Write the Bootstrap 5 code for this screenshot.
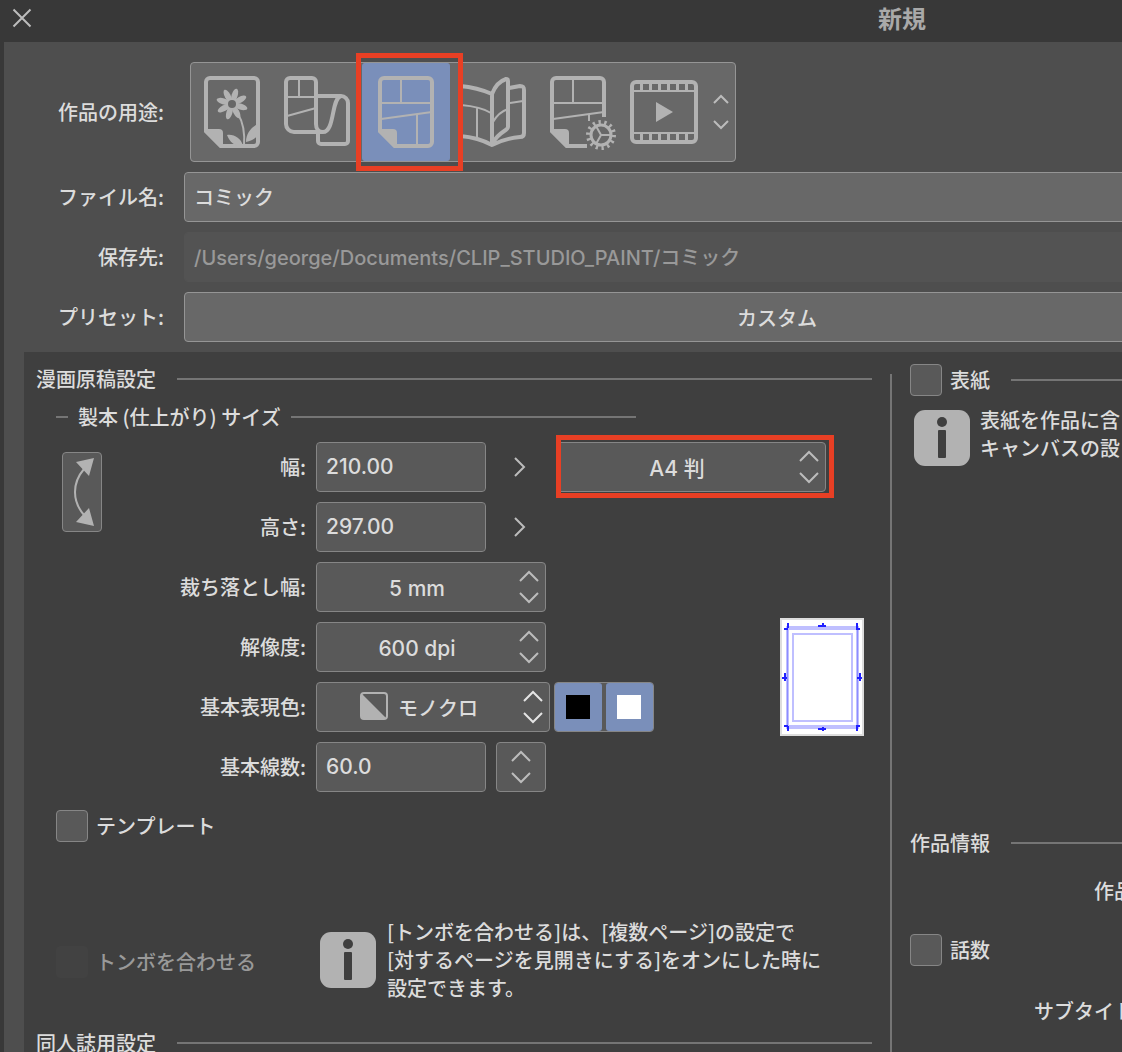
<!DOCTYPE html>
<html lang="ja">
<head>
<meta charset="utf-8">
<meta name="viewport" content="width=device-width, initial-scale=1">
<title>新規</title>
<link rel="stylesheet" href="https://cdn.jsdelivr.net/npm/bootstrap@5.3.0/dist/css/bootstrap.min.css">
<style>
:root { --ink: #dcdcdc; --icon: #b2b2b2; --frame: #4e4e4e; --panel: #3f3f3f; --bar: #383838; --field: #595959; --edge: #868686; --pick: #7a8fba; --hot: #e83f24; --line: #757575; }
body { height: 100vh; overflow: hidden; background: var(--bar); color: var(--ink); font: 500 20px/28px "Noto Sans CJK JP", sans-serif; }
/* the dialog is wider than a small window and is cut at its right edge */
.dialog { min-width: 1802px; min-height: 100vh; padding-left: 4px; }
.titlebar { height: 42px; padding: 0 32px 6px 6px; }
.titlebar h1 { font-size: 24px; line-height: 36px; font-weight: 700; color: #a9a9a9; }
.bare { background: none; border: 0; padding: 0; border-radius: 0; line-height: 0; }
.frame-body { background: var(--frame); padding-top: 20px; }
.top-form { width: 1394px; row-gap: 10px; }
.top-label { width: 160px; text-align: right; flex: none; }
.top-row { column-gap: 20px; }
.purpose { margin-left: 6px; height: 100px; background: #686868; border: 1px solid #959595; border-radius: 4px; }
.purpose button { width: 86px; height: 98px; flex: none; }
.purpose .picked { background: var(--pick); border-radius: 3px; box-shadow: -1px 0 var(--pick), 1px 0 var(--pick); z-index: 2; }
.purpose .stepper button { width: 28px; height: 26px; display: block; }
.hot { border: 5px solid var(--hot); pointer-events: none; z-index: 3; }
.hot-purpose { inset: -10px -14px -10px -7px; }
.hot-size { inset: -7px -8px -6px 0; }
.glyph { fill: none; stroke: var(--icon); stroke-width: 4; display: block; }
.glyph .thin { stroke-width: 2; }
.glyph .solid { fill: var(--icon); stroke: none; }
.chev { fill: none; stroke: #bcbcbc; stroke-width: 2; display: block; }
.form-control, .form-select { height: 50px; padding: 0 9px; border: 1px solid var(--edge); border-radius: 4px; background-color: var(--field); color: var(--ink); font: 500 21px/28px Inter, "Noto Sans CJK JP", sans-serif; }
.form-control { padding-bottom: 2px; }
.top-form .form-control, .top-form .form-select { background-color: #686868; border-color: #959595; font-size: 20px; }
.top-form .form-control:disabled { background-color: #535353; border-color: #535353; color: #999; }
.form-select { padding: 4px 28px 0 0; text-align: center; text-align-last: center; background-position: right 6px center; background-size: 20px 34px;
  background-image: url("data:image/svg+xml,%3csvg xmlns='http://www.w3.org/2000/svg' viewBox='0 0 20 34'%3e%3cpath d='M1 11l9-9 9 9M1 23l9 9 9-9' fill='none' stroke='%23bcbcbc' stroke-width='2'/%3e%3c/svg%3e"); }
.select-ink { width: 234px; padding-left: 38px; font-size: 20px;
  background-image: url("data:image/svg+xml,%3csvg xmlns='http://www.w3.org/2000/svg' viewBox='0 0 20 34'%3e%3cpath d='M1 11l9-9 9 9M1 23l9 9 9-9' fill='none' stroke='%23e4e4e4' stroke-width='2'/%3e%3c/svg%3e"); }
.ink-icon { left: 44px; top: 10px; pointer-events: none; }
.w-num { width: 170px; }
.w-pick { width: 230px; }
.w-size { width: 270px; }
.more { width: 70px; height: 50px; padding-right: 2px; }
.boxed { background: var(--field); border: 1px solid var(--edge); border-radius: 4px; }
.swap { width: 40px; height: 80px; margin-top: 10px; padding: 0; flex: none; line-height: 0; }
.spin { width: 50px; height: 50px; margin-left: 10px; }
.spin button { width: 48px; height: 24px; }
.inks { width: 100px; height: 50px; margin-left: 4px; }
.inks button { width: 47px; height: 48px; border: 0; border-radius: 3px; background: var(--pick); padding: 11px; }
.chip { display: block; width: 24px; height: 24px; }
.settings { margin: 10px 0 0 20px; background: var(--panel); }
.manuscript { flex: 0 0 866px; padding: 12px 18px 0 12px; }
.cover { padding: 12px 18px 0; }
.divider { width: 2px; margin-top: 22px; background: var(--line); flex: none; }
.heading { min-height: 30px; gap: 21px; margin: 0; font-size: 20px; line-height: 28px; font-weight: 500; color: var(--ink); }
.heading::after { content: ""; height: 2px; background: var(--line); flex: 1; }
.subheading { gap: 10px; margin: 8px 236px 10px 20px; }
.subheading::before { content: ""; width: 12px; height: 2px; background: var(--line); }
.size-block { margin-left: 26px; }
.field-rows { row-gap: 10px; }
.field-label { width: 214px; padding-right: 10px; text-align: right; flex: none; }
.preview { margin: 0 8px 56px auto; flex: none; }
.form-check-input { width: 32px; height: 32px; margin: 0; border: 1px solid var(--edge); background-color: var(--field); flex: none; }
.form-check-input[type=checkbox] { border-radius: 4px; }
.form-check-input:disabled { opacity: 1; background-color: #424242; border-color: #424242; }
.form-check-input:disabled ~ label { opacity: 1; }
.tick { gap: 8px; min-height: 32px; }
.template-row { margin: 18px 0 76px 20px; }
.tombo-row { margin: 0 0 26px 20px; }
.tombo-row .tick { width: 264px; padding-top: 4px; color: #999; }
.note { gap: 11px; }
.cover-note { gap: 10px; margin: 6px 0 362px 4px; }
.cover-note svg { margin-top: 8px; }
.work-label { width: 250px; height: 50px; line-height: 50px; text-align: right; margin-top: 8px; display: block; }
.episode { margin: 18px 0 20px; }
</style>
<script src="https://cdn.jsdelivr.net/npm/bootstrap@5.3.0/dist/js/bootstrap.bundle.min.js"></script>
</head>
<body>
<main class="dialog">
  <header class="titlebar d-flex align-items-center">
    <button class="bare" type="button" aria-label="閉じる"><svg class="chev" width="24" height="24" viewBox="0 0 24 24"><path d="M3.500 3.500l17 17M20.500 3.500l-17 17"/></svg></button>
    <h1 class="flex-fill text-center m-0">新規</h1>
  </header>

  <form class="frame-body">
    <div class="top-form d-flex flex-column">
      <div class="top-row d-flex align-items-center">
        <span class="top-label" id="purpose-label">作品の用途:</span>
        <div class="purpose d-flex align-items-center" role="group" aria-labelledby="purpose-label">
          <button class="bare" type="button" aria-label="イラスト">
            <svg class="glyph" width="86" height="98" viewBox="191 63 86 98">
              <path d="M206 131V82a4 4 0 0 1 4-4h44a4 4 0 0 1 4 4v60a4 4 0 0 1-4 4h-33z"/>
              <path class="solid" d="M204 129h15a4 4 0 0 1 4 4v15h-3l-16-16z"/>
              <g class="solid" transform="rotate(17 232 104)">
                <ellipse cx="232" cy="95" rx="3" ry="7"/><ellipse cx="232" cy="113" rx="3" ry="7"/><ellipse cx="223" cy="104" rx="7" ry="3"/><ellipse cx="241" cy="104" rx="7" ry="3"/>
                <g transform="rotate(45 232 104)"><ellipse cx="232" cy="95" rx="3" ry="7"/><ellipse cx="232" cy="113" rx="3" ry="7"/><ellipse cx="223" cy="104" rx="7" ry="3"/><ellipse cx="241" cy="104" rx="7" ry="3"/></g>
                <circle cx="232" cy="104" r="6"/>
              </g>
              <circle cx="232" cy="104" r="4" fill="#686868" stroke="none"/>
              <path class="thin" d="M238 114c5 8 7 19 6 32"/>
              <path class="solid" d="M227 135c7-1 14 3 16 11-7 1-13-3-16-11zM258 124v11c-3 4-7 6-12 7 0-8 5-15 12-18z"/>
            </svg>
          </button>
          <button class="bare" type="button" aria-label="ウェブトゥーン">
            <svg class="glyph" width="86" height="98" viewBox="277 63 86 98">
              <path d="M317 96h24a7 7 0 0 1 7 7v38a3 3 0 0 1-3 3h-24a3 3 0 0 1-3-3v-9"/>
              <path d="M341 96c-10 2-6 36-18 36-5 0-7-4-7-8V82a4 4 0 0 0-4-4h-22a4 4 0 0 0-4 4v42a8 8 0 0 0 8 8h29"/>
              <path class="thin" d="M299 78v18M286 97h30M287 116l29-8"/>
            </svg>
          </button>
          <button class="bare picked position-relative" type="button" aria-label="コミック" aria-pressed="true">
            <svg class="glyph" width="86" height="98" viewBox="363 63 86 98">
              <path d="M380 131V82a4 4 0 0 1 4-4h44a4 4 0 0 1 4 4v60a4 4 0 0 1-4 4h-33z"/>
              <path class="solid" d="M378 129h15a4 4 0 0 1 4 4v15h-3l-16-16z"/>
              <path class="thin" d="M401 78v24M380 103h52M381 119l51-7M417 114v32"/>
            </svg>
            <span class="hot hot-purpose position-absolute"></span>
          </button>
          <button class="bare" type="button" aria-label="同人誌入稿">
            <svg class="glyph" width="86" height="98" viewBox="449 63 86 98" stroke-linejoin="round">
              <path d="M492 145c-9-5-20-8-32-9V86c12 1 23 4 32 8zM492 94c3-8 8-13 14-15 1 0 2 0 2 2v46c0 4-9 4-16 17M509 88l11-2c3 0 4 1 4 4v43c0 3-2 4-4 4-11 1-20 4-28 8"/>
              <path class="thin" d="M461 105c12 1 22 3 30 8M477 107v31M493 122c4-7 9-11 15-13M510 103l13-2"/>
            </svg>
          </button>
          <button class="bare" type="button" aria-label="すべてのコミック設定">
            <svg class="glyph" width="86" height="98" viewBox="535 63 86 98">
              <path d="M604 117V82a4 4 0 0 0-4-4h-44a4 4 0 0 0-4 4v49l15 15h20"/>
              <path class="solid" d="M550 129h15a4 4 0 0 1 4 4v15h-3l-16-16z"/>
              <path class="thin" d="M573 78v24M552 103h52M553 119l51-7M589 114v7"/>
              <circle cx="601" cy="135" r="12.500" stroke-dasharray="2.200 3.410" stroke-width="5"/>
              <circle cx="601" cy="135" r="10" stroke-width="3"/>
              <path class="thin" d="M601 135h10M601 135l-5-9M601 135l-5 9"/>
            </svg>
          </button>
          <button class="bare" type="button" aria-label="アニメーション">
            <svg class="glyph" width="86" height="98" viewBox="621 63 86 98">
              <rect x="632" y="82" width="64" height="60" rx="4"/>
              <path class="thin" d="M633 91h62M633 133h62"/>
              <path stroke-width="6" stroke-dasharray="3 6" d="M640 87h54M640 137h54"/>
              <path class="solid" d="M656 102l17 10-17 10z"/>
            </svg>
          </button>
          <div class="stepper">
            <button class="bare" type="button" aria-label="前へ"><svg class="chev" width="28" height="26" viewBox="0 0 28 26"><path d="M7 17l7-7 7 7"/></svg></button>
            <button class="bare" type="button" aria-label="次へ"><svg class="chev" width="28" height="26" viewBox="0 0 28 26"><path d="M7 9l7 7 7-7"/></svg></button>
          </div>
        </div>
      </div>
      <div class="top-row d-flex align-items-center">
        <label class="top-label" for="file-name">ファイル名:</label>
        <input class="form-control" id="file-name" type="text" value="コミック">
      </div>
      <div class="top-row d-flex align-items-center">
        <label class="top-label" for="save-to">保存先:</label>
        <input class="form-control" id="save-to" type="text" value="/Users/george/Documents/CLIP_STUDIO_PAINT/コミック" disabled>
      </div>
      <div class="top-row d-flex align-items-center">
        <label class="top-label" for="preset">プリセット:</label>
        <select class="form-select" id="preset"><option>カスタム</option></select>
      </div>
    </div>

    <div class="settings d-flex">
      <section class="manuscript">
        <h2 class="heading d-flex align-items-center">漫画原稿設定</h2>
        <h3 class="heading subheading d-flex align-items-center">製本 (仕上がり) サイズ</h3>
        <div class="size-block d-flex align-items-start">
          <button class="swap boxed" type="button" aria-label="幅と高さを入れ替え">
            <svg width="38" height="78" viewBox="63 453 38 78"><path d="M84 469c-12 14-12 32 0 46" fill="none" stroke="#b2b2b2" stroke-width="2"/><path d="M76 462l18-4-5 18zM89 508l5 18-18-4z" fill="#b2b2b2"/></svg>
          </button>
          <div class="field-rows d-flex flex-column flex-fill">
            <div class="d-flex align-items-center">
              <label class="field-label" for="width">幅:</label>
              <input class="form-control w-num" id="width" type="text" value="210.00">
              <button class="bare more d-flex align-items-center justify-content-center" type="button" aria-label="幅の候補"><svg class="chev" width="12" height="20" viewBox="0 0 12 20"><path d="M1 1l9 9-9 9"/></svg></button>
              <div class="position-relative">
                <select class="form-select w-size" aria-label="用紙サイズ"><option>A4 判</option></select>
                <span class="hot hot-size position-absolute"></span>
              </div>
            </div>
            <div class="d-flex align-items-center">
              <label class="field-label" for="height">高さ:</label>
              <input class="form-control w-num" id="height" type="text" value="297.00">
              <button class="bare more d-flex align-items-center justify-content-center" type="button" aria-label="高さの候補"><svg class="chev" width="12" height="20" viewBox="0 0 12 20"><path d="M1 1l9 9-9 9"/></svg></button>
            </div>
            <div class="d-flex">
              <div class="field-rows d-flex flex-column">
                <div class="d-flex align-items-center">
                  <label class="field-label" for="bleed">裁ち落とし幅:</label>
                  <select class="form-select w-pick" id="bleed"><option>5 mm</option></select>
                </div>
                <div class="d-flex align-items-center">
                  <label class="field-label" for="dpi">解像度:</label>
                  <select class="form-select w-pick" id="dpi"><option>600 dpi</option></select>
                </div>
                <div class="d-flex align-items-center">
                  <label class="field-label" for="ink">基本表現色:</label>
                  <div class="position-relative">
                    <select class="form-select select-ink" id="ink"><option>モノクロ</option></select>
                    <svg class="ink-icon position-absolute" width="28" height="28" viewBox="0 0 28 28"><rect x="1" y="1" width="26" height="26" rx="3" fill="none" stroke="#b2b2b2" stroke-width="2"/><path d="M1 1l26 26H3a2 2 0 0 1-2-2z" fill="#b2b2b2"/></svg>
                  </div>
                  <div class="inks boxed d-flex justify-content-between" role="group" aria-label="描画色">
                    <button type="button" aria-label="黒" aria-pressed="true"><span class="chip bg-black"></span></button>
                    <button type="button" aria-label="白" aria-pressed="true"><span class="chip bg-white"></span></button>
                  </div>
                </div>
                <div class="d-flex align-items-center">
                  <label class="field-label" for="lines">基本線数:</label>
                  <input class="form-control w-num" id="lines" type="text" value="60.0">
                  <div class="spin boxed d-flex flex-column">
                    <button class="bare" type="button" aria-label="増やす"><svg class="chev" width="48" height="24" viewBox="0 0 48 24"><path d="M15 18l9-9 9 9"/></svg></button>
                    <button class="bare" type="button" aria-label="減らす"><svg class="chev" width="48" height="24" viewBox="0 0 48 24"><path d="M15 6l9 9 9-9"/></svg></button>
                  </div>
                </div>
              </div>
              <svg class="preview align-self-end" width="84" height="118" viewBox="0 0 84 118" aria-hidden="true">
                <rect x="1" y="1" width="82" height="116" fill="#fff" stroke="#ddd" stroke-width="2"/>
                <path d="M6 8h73v4H6zM6 107h73v4H6zM6 12h3v95H6zM76 12h3v95h-3z" fill="#bfbfff"/>
                <path d="M7 12h1v95H7zM77 12h1v95h-1z" fill="#8c8cff"/>
                <rect x="13" y="16" width="59" height="87" fill="none" stroke="#bfbfff" stroke-width="2"/>
                <path d="M7 5h2v5H7zM4 10h4v2H4zM76 5h2v5h-2zM76 10h4v2h-4zM7 108h2v5H7zM4 107h4v2H4zM76 108h2v5h-2zM76 107h4v2h-4zM38 7h8v2h-8zM42 5h2v4h-2zM38 110h8v2h-8zM42 109h2v4h-2zM2 59h5v2H2zM4 55h2v8H4zM77 59h5v2h-5zM79 55h2v8h-2z" fill="#2020ff"/>
              </svg>
            </div>
          </div>
        </div>

        <div class="template-row tick d-flex align-items-center">
          <input class="form-check-input" type="checkbox" id="template"><label for="template">テンプレート</label>
        </div>
        <div class="tombo-row d-flex align-items-center">
          <div class="tick d-flex align-items-center">
            <input class="form-check-input" type="checkbox" id="tombo" disabled><label for="tombo">トンボを合わせる</label>
          </div>
          <div class="note d-flex align-items-center">
            <svg width="56" height="56" viewBox="0 0 56 56" aria-hidden="true"><rect width="56" height="56" rx="11" fill="#b2b2b2"/><circle cx="28" cy="12" r="5" fill="#3f3f3f"/><rect x="24" y="20" width="8" height="28" rx="1" fill="#3f3f3f"/></svg>
            <div>[トンボを合わせる]は、[複数ページ]の設定で<br>[対するページを見開きにする]をオンにした時に<br>設定できます。</div>
          </div>
        </div>
        <h2 class="heading d-flex align-items-center">同人誌用設定</h2>
      </section>

      <div class="divider"></div>

      <section class="cover flex-fill">
        <div class="heading d-flex align-items-center">
          <div class="tick d-flex align-items-center"><input class="form-check-input" type="checkbox" id="cover"><label for="cover">表紙</label></div>
        </div>
        <div class="cover-note note d-flex align-items-center">
          <svg width="56" height="56" viewBox="0 0 56 56" aria-hidden="true"><rect width="56" height="56" rx="11" fill="#b2b2b2"/><circle cx="28" cy="12" r="5" fill="#3f3f3f"/><rect x="24" y="20" width="8" height="28" rx="1" fill="#3f3f3f"/></svg>
          <div>表紙を作品に含<br>キャンバスの設</div>
        </div>
        <h2 class="heading d-flex align-items-center">作品情報</h2>
        <span class="work-label">作品名:</span>
        <div class="episode tick d-flex align-items-center"><input class="form-check-input" type="checkbox" id="episode"><label for="episode">話数</label></div>
        <span class="work-label">サブタイトル:</span>
      </section>
    </div>
  </form>
</main>
</body>
</html>
